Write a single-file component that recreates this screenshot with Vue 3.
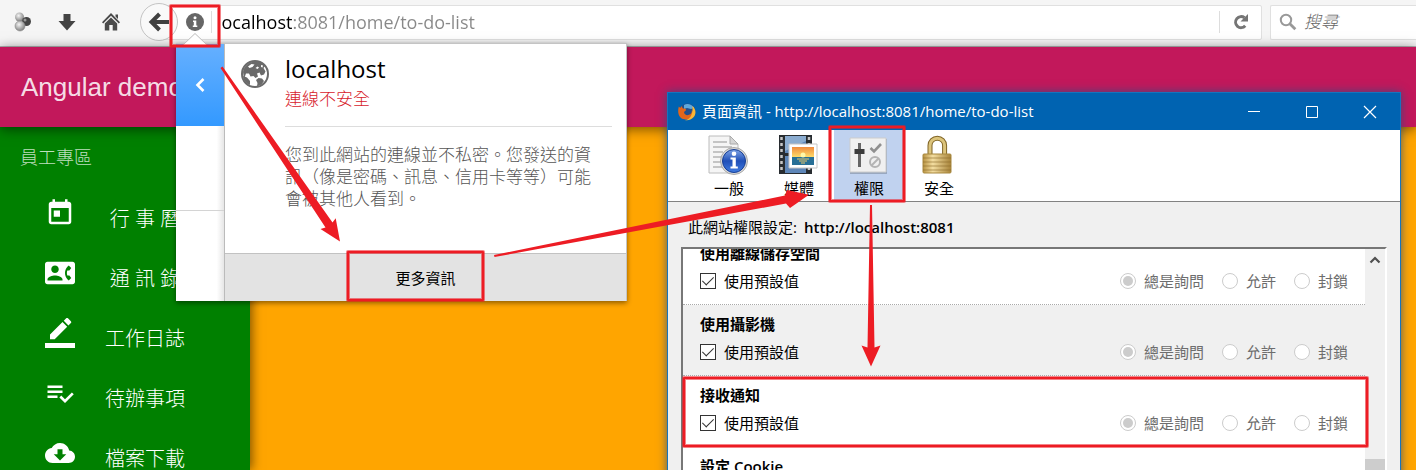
<script setup>
import { ref } from 'vue'

const address = ref('localhost:8081/home/to-do-list')
const query = ref('')

const menu = [
  { text: '行 事 曆', d: 'M19 3h-1V1h-2v2H8V1H6v2H5c-1.11 0-1.99.9-1.99 2L3 19c0 1.1.89 2 2 2h14c1.1 0 2-.9 2-2V5c0-1.1-.9-2-2-2zm0 16H5V8h14v11zM7 10h5v5H7z' },
  { text: '通 訊 錄', d: 'M22 3H2C.9 3 0 3.9 0 5v14c0 1.1.9 2 2 2h20c1.1 0 1.99-.9 1.99-2L24 5c0-1.1-.9-2-2-2zM8 6c1.66 0 3 1.34 3 3s-1.34 3-3 3-3-1.34-3-3 1.34-3 3-3zm6 12H2v-1c0-2 4-3.1 6-3.1s6 1.1 6 3.1v1zm3.85-4h1.64L21 16l-1.99 1.99c-1.31-.98-2.28-2.38-2.73-3.99-.18-.64-.28-1.31-.28-2s.1-1.36.28-2c.45-1.62 1.42-3.01 2.73-3.99L21 8l-1.51 2h-1.64c-.22.63-.35 1.3-.35 2s.13 1.37.35 2z' },
  { text: '工作日誌', d: 'M17.75 7L14 3.25l-10 10V17h3.75l10-10zm2.96-2.96c.39-.39.39-1.02 0-1.41L18.37.29c-.39-.39-1.02-.39-1.41 0L15 2.25 18.75 6l1.96-1.96zM0 20h24v4H0z' },
  { text: '待辦事項', d: 'M14 10H2v2h12v-2zm0-4H2v2h12V6zM2 16h8v-2H2v2zm19.5-4.5L23 13l-6.99 7-4.51-4.5L13 14l3.01 3 5.49-5.5z' },
  { text: '檔案下載', d: 'M19.35 10.04C18.67 6.59 15.64 4 12 4 9.11 4 6.6 5.64 5.35 8.04 2.34 8.36 0 10.91 0 14c0 3.31 2.69 6 6 6h13c2.76 0 5-2.24 5-5 0-2.64-2.05-4.78-4.65-4.96zM17 13l-5 5-5-5h3V9h4v4h3z' }
]

const tabs = [
  { id: 'general', text: '一般' },
  { id: 'media', text: '媒體' },
  { id: 'permissions', text: '權限' },
  { id: 'security', text: '安全' }
]

const choices = ['總是詢問', '允許', '封鎖']
const permissions = ref([
  { id: 'offline', title: '使用離線儲存空間', useDefault: true },
  { id: 'camera', title: '使用攝影機', useDefault: true },
  { id: 'notify', title: '接收通知', useDefault: true },
  { id: 'cookie', title: '設定 Cookie', useDefault: true }
])
</script>

<template>
  <div class="screen">
    <header class="chrome">
      <button class="tool" aria-label="擴充套件">
        <svg width="20" height="22" viewBox="0 0 20 22">
          <defs>
            <radialGradient id="ball" cx=".4" cy=".35" r=".7"><stop offset="0" stop-color="#f4f4f4" /><stop offset="1" stop-color="#777" /></radialGradient>
          </defs>
          <circle cx="6.500" cy="6" r="4.500" fill="url(#ball)" />
          <circle cx="13.500" cy="10.500" r="4.500" fill="#444" />
          <circle cx="12" cy="9" r="1.500" fill="#999" />
          <circle cx="7" cy="15" r="5" fill="url(#ball)" stroke="#888" stroke-width=".6" />
        </svg>
      </button>
      <button class="tool" aria-label="下載">
        <svg width="20" height="20" viewBox="0 0 20 20"><path d="M6.500 2h7v7H18.500L10 18.500 1.500 9H6.500z" fill="#444" /></svg>
      </button>
      <button class="tool" aria-label="首頁">
        <svg width="20" height="20" viewBox="0 0 20 20"><path d="M10 1L19 10.200 17.800 11.400 10 3.800 2.200 11.400 1 10.200z M14.500 2.500h2.500v4.500l-2.500-2.500z M10 5.600l6.200 6V18.500h-4.500V13H8.300v5.500H3.800v-6.900z" fill="#4a4a4a" /></svg>
      </button>
      <div class="address">
        <button class="back" aria-label="上一頁">
          <svg width="22" height="22" viewBox="0 0 22 22"><path d="M11.500 3L3.500 11l8 8M4 11h17" fill="none" stroke="#404040" stroke-width="4" /></svg>
        </button>
        <button class="info" aria-label="網站資訊">
          <svg width="18" height="18" viewBox="0 0 18 18"><circle cx="9" cy="9" r="9" fill="#666" /><circle cx="9" cy="4.800" r="1.500" fill="#fff" /><path d="M7 7.500h3.300v5h1v1.500H6.800v-1.500h1V9H7z" fill="#fff" /></svg>
        </button>
        <input v-model="address" class="url" type="text" aria-label="網址" />
        <button class="reload" aria-label="重新載入">
          <svg width="16" height="16" viewBox="0 0 16 16"><path d="M12.200 11.800A5.500 5.500 0 1 1 11.500 3.800" fill="none" stroke="#757575" stroke-width="3" /><path d="M15 0v7.500H7.500z" fill="#757575" /></svg>
        </button>
      </div>
      <label class="search">
        <svg width="18" height="18" viewBox="0 0 18 18"><circle cx="7" cy="7" r="5.200" fill="none" stroke="#999" stroke-width="2" /><path d="M10.800 10.800l5.500 5.500" stroke="#999" stroke-width="2.800" /></svg>
        <input v-model="query" type="text" placeholder="搜尋" aria-label="搜尋" />
      </label>
    </header>

    <div class="banner"><h1>Angular demo</h1></div>

    <div class="page">
      <nav class="sidebar">
        <h2>員工專區</h2>
        <a v-for="item in menu" :key="item.text" href="#">
          <svg width="30" height="30" viewBox="0 0 24 24"><path :d="item.d" fill="#fff" /></svg>
          <span>{{ item.text }}</span>
        </a>
      </nav>
      <main class="content"></main>
    </div>

    <section class="popover">
      <svg class="pointer" width="24" height="12" viewBox="0 0 24 12"><path d="M0 12L12 0 24 12z" fill="#fff" /><path d="M0 12L12 .5 24 12" fill="none" stroke="#bbb" /></svg>
      <div class="rail">
        <button aria-label="返回">
          <svg width="12" height="16" viewBox="0 0 12 16"><path d="M9.500 2L3.500 8l6 6" fill="none" stroke="#fff" stroke-width="2.600" /></svg>
        </button>
        <div class="rail-gap"></div>
      </div>
      <div class="details">
        <div class="site">
          <svg class="globe" width="28" height="28" viewBox="0 0 28 28">
            <circle cx="14" cy="14" r="13" fill="#fff" stroke="#6a6a6a" stroke-width="2" />
            <path d="M2 12C3 6 8 1.500 15 1.500c4 0 7 2 9 4.500l-1.500 2 2 3.500-1.500 3-3 1-1.500-3-2.500 1 1 3-2.500 1.500-2-2-3 .5-1.500-3-3 0-2 5.500z" fill="#6a6a6a" />
            <path d="M2 16l4 1.500 3 3.500 0 4-3-1.500C3.500 21 2.200 19 2 16zM15 20l2.500-2 3.500.5 2 2.500-2.500 3.500-4.500 2 .5-3.500z" fill="#6a6a6a" />
            <path d="M7 6.500l3.500-2.500 3 .5-2 2.500-3 1zM14.500 8l2-1.500 1.500 1-1.500 1.500zM20 5l2 .5-.5 2-1.500-.5z" fill="#fff" />
          </svg>
          <div class="summary">
            <h3>localhost</h3>
            <p class="insecure">連線不安全</p>
            <p class="explain">您到此網站的連線並不私密。您發送的資訊（像是密碼、訊息、信用卡等等）可能會被其他人看到。</p>
          </div>
        </div>
        <button class="more">更多資訊</button>
      </div>
    </section>

    <section class="dialog">
      <div class="titlebar">
        <svg width="18" height="18" viewBox="0 0 18 18">
          <circle cx="9.500" cy="8.500" r="8" fill="#214f8c" />
          <path d="M6 2c3-2 8-1 10 3l-3 1-4-1-3 1z" fill="#5fa9dc" />
          <path d="M.8 3.500l1.500 1.500L3.300 3l1.700 2.500c2 0 3.500.3 3 1.800L6 9c.3 2.800 2.800 3.800 5 2.800 2.200-.8 3-2.500 2.800-4.800 1.700 2.500 1.500 5-.3 7-2.500 2.500-7 3.500-10.500 1C0 12.500-.4 8 .8 3.500z" fill="#e2661b" />
          <path d="M14.500 3c3.500 3 4 8 1 11.300-2.200 2.500-5.500 3.300-8.500 2.700 5-.8 8-5 7.500-14z" fill="#fbb635" />
        </svg>
        <span class="caption">頁面資訊 - http://localhost:8081/home/to-do-list</span>
        <button aria-label="最小化"><svg width="14" height="14" viewBox="0 0 14 14"><path d="M1 6.500h12" stroke="#fff" /></svg></button>
        <button aria-label="最大化"><svg width="14" height="14" viewBox="0 0 14 14"><path d="M1.500 1.500h11v11h-11z" fill="none" stroke="#fff" /></svg></button>
        <button aria-label="關閉"><svg width="14" height="14" viewBox="0 0 14 14"><path d="M1 1l12 12M13 1L1 13" stroke="#fff" stroke-width="1.200" /></svg></button>
      </div>

      <div class="tabs">
        <button v-for="tab in tabs" :key="tab.id" :class="{ active: tab.id === 'permissions' }">
          <svg v-if="tab.id === 'general'" width="40" height="40" viewBox="0 0 40 40">
            <defs><linearGradient id="blue" x2="0" y2="1"><stop offset="0" stop-color="#7fa4e6" /><stop offset=".5" stop-color="#1f4fb8" /><stop offset="1" stop-color="#3f7be0" /></linearGradient></defs>
            <path d="M1 1h21l8 8v29H1z" fill="#f5f5f5" stroke="#bcbcbc" />
            <path d="M22 1v8h8z" fill="#d5d5d5" stroke="#aaa" />
            <path d="M5 7h14M5 12h19M5 17h10M5 22h8M5 27h8M5 32h10" stroke="#b4b4b4" stroke-width="1.500" />
            <circle cx="26" cy="26" r="13.500" fill="#dadada" stroke="#999" stroke-width=".8" />
            <circle cx="26" cy="26" r="11.500" fill="url(#blue)" stroke="#163d92" />
            <circle cx="26" cy="18.800" r="2.300" fill="#fff" />
            <path d="M22.500 22.500h5.300v9h2v2h-7.300v-2h2v-7h-2z" fill="#fff" />
          </svg>
          <svg v-else-if="tab.id === 'media'" width="40" height="40" viewBox="0 0 40 40">
            <defs><linearGradient id="sky" x2="0" y2="1"><stop offset="0" stop-color="#f08a3c" /><stop offset="1" stop-color="#ffe36e" /></linearGradient></defs>
            <path d="M1 0h33v39H1z" fill="#282c30" />
            <path d="M7 1h21v17H7zM7 21h21v17H7z" fill="#5e86b8" />
            <path d="M7 1h21v5L7 16z" fill="#8bacd0" />
            <path d="M3.500 2v36M31 2v36" stroke="#c8c8c8" stroke-width="2.500" stroke-dasharray="3 3" />
            <path d="M11 9h28v24H11z" fill="#fff" stroke="#c4c4c4" />
            <path d="M14 12h22v11H14z" fill="url(#sky)" />
            <path d="M14 22h22v8H14z" fill="#276f96" />
            <circle cx="25" cy="20" r="2.500" fill="#fff7a8" />
            <path d="M19 24h12M21 26h8M23 28h4" stroke="#e9c86c" />
          </svg>
          <svg v-else-if="tab.id === 'permissions'" width="40" height="40" viewBox="0 0 40 40">
            <path d="M2 4h37v35H2z" fill="#000" opacity=".2" />
            <path d="M2 3h36v34H2z" fill="#f0f0f0" stroke="#ccc" />
            <path d="M11.500 8v24" stroke="#666" stroke-width="3" />
            <path d="M6.500 14h10v5h-10z" fill="#3c3c3c" />
            <path d="M22.500 13l3.500 3.500L33 9" fill="none" stroke="#909090" stroke-width="2.600" />
            <circle cx="27" cy="27" r="5" fill="none" stroke="#b4b4b4" stroke-width="2" /><path d="M23.500 30.500l7-7" stroke="#b4b4b4" stroke-width="2" />
          </svg>
          <svg v-else width="40" height="40" viewBox="0 0 40 40">
            <defs><linearGradient id="brass" x2="1"><stop offset="0" stop-color="#b99443" /><stop offset=".35" stop-color="#f3dda0" /><stop offset="1" stop-color="#a8843a" /></linearGradient></defs>
            <path d="M12 20V10.500a7.300 7.300 0 0 1 14.600 0V20" fill="none" stroke="#806526" stroke-width="5" />
            <path d="M12 20V10.500a7.300 7.300 0 0 1 14.600 0V20" fill="none" stroke="#dcc47c" stroke-width="3" />
            <rect x="5" y="19" width="28" height="19" rx="1" fill="url(#brass)" stroke="#a8883f" />
            <path d="M5 23h28M5 27h28M5 31h28M5 35h28" stroke="#8b6a28" stroke-width=".6" />
          </svg>
          <span>{{ tab.text }}</span>
        </button>
      </div>

      <p class="scope">此網站權限設定:<strong>http://localhost:8081</strong></p>

      <div class="list">
        <div class="rows">
          <fieldset v-for="p in permissions" :key="p.id" class="row">
            <legend>{{ p.title }}</legend>
            <div class="options">
              <label class="default"><input v-model="p.useDefault" type="checkbox" />使用預設值</label>
              <label v-for="(c, i) in choices" :key="c" class="choice"><input type="radio" :name="p.id" :checked="i === 0" disabled />{{ c }}</label>
            </div>
          </fieldset>
        </div>
        <div class="scrollbar">
          <button aria-label="向上捲動"><svg width="12" height="10" viewBox="0 0 12 10"><path d="M1.500 7.500L6 3l4.500 4.500" fill="none" stroke="#505050" stroke-width="2.200" /></svg></button>
          <div class="thumb"></div>
        </div>
      </div>
    </section>

    <svg class="marks" width="1416" height="470" viewBox="0 0 1416 470">
      <g fill="none" stroke="#ed1c24" stroke-linejoin="round">
        <g stroke-width="4" opacity=".55"><rect x="171" y="6" width="48" height="40" /><rect x="348" y="252" width="135" height="48" /><rect x="830" y="127" width="74" height="74" /><rect x="684" y="378" width="683" height="68" /></g>
        <g stroke-width="2"><rect x="171" y="6" width="48" height="40" /><rect x="348" y="252" width="135" height="48" /><rect x="830" y="127" width="74" height="74" /><rect x="684" y="378" width="683" height="68" /></g>
      </g>
      <g fill="#ed1c24">
        <path d="M220.500 68L222.500 66.500 332.500 222.500 335.700 218.300 340 241.500 320.500 229 325.500 227.500z" />
        <path d="M494 255L785 195.500 787 190 809 194.700 790 208 786 203.500 494.500 257z" />
        <path d="M870 205h2L874.500 347.500 880.500 345.500 871 366.500 861.500 345.500 867.500 347.500z" />
      </g>
    </svg>
  </div>
</template>

<style>
html, body { margin: 0; overflow: hidden; }
</style>

<style scoped>
* { box-sizing: border-box; }
.screen {
  position: relative;
  display: flex;
  flex-direction: column;
  height: 100vh;
  overflow: hidden;
  font-family: "Open Sans", "Noto Sans CJK TC", sans-serif;
  font-size: 15px;
  line-height: 20px;
  color: #000;
}
button, input { font: inherit; color: inherit; border: 0; background: none; padding: 0; margin: 0; }
h1, h2, h3, p { margin: 0; font-weight: 400; }
button { display: flex; align-items: center; justify-content: center; }

.chrome {
  flex: none;
  display: flex;
  align-items: center;
  height: 47px;
  padding: 0 0 2px;
  background: #f5f5f5;
  border-bottom: 1px solid #b5b5b5;
  overflow: hidden;
}
.tool { flex: none; width: 44px; height: 40px; }
.address {
  flex: 1;
  display: flex;
  align-items: center;
  height: 35px;
  margin-left: 27px;
  background: #fff;
  border: 1px solid #e0e0e0;
  border-radius: 2px;
}
.chrome .tool:first-child { margin-left: 1px; }
.back {
  flex: none;
  width: 38px;
  height: 38px;
  margin-left: -21px;
  border: 1px solid #c4c4c4;
  border-radius: 50%;
  background: #f9f9f9;
}
.info { flex: none; width: 34px; height: 22px; border-right: 1px solid #ddd; }
.url {
  flex: 1;
  min-width: 0;
  height: 32px;
  margin-left: 5px;
  font-size: 18px;
  background: linear-gradient(90deg, #000 75px, #888 75px);
  -webkit-background-clip: text;
  background-clip: text;
  color: transparent;
}
.reload { flex: none; width: 42px; height: 22px; border-left: 1px solid #ddd; }
.search {
  flex: none;
  display: flex;
  align-items: center;
  gap: 7px;
  width: 146px;
  height: 35px;
  margin-left: 8px;
  padding-left: 8px;
  background: #fff;
  border: 1px solid #e0e0e0;
  border-right: 0;
  border-radius: 2px 0 0 2px;
}
.search input { width: 100px; font-size: 17px; font-weight: 300; font-style: italic; }
.search input::placeholder { color: #666; opacity: 1; }

.banner {
  flex: none;
  position: relative;
  z-index: 1;
  display: flex;
  align-items: center;
  height: 80px;
  padding-left: 21px;
  background: #c2185b;
  box-shadow: 0 2px 12px rgba(0, 0, 0, .55);
}
.banner h1 { font: 26px/32px "Liberation Sans", Arial, sans-serif; color: rgba(255, 255, 255, .87); }
.page { flex: 1; display: flex; min-height: 0; }
.content { flex: 1; background: orange; }
.sidebar {
  flex: none;
  position: relative;
  width: 250px;
  padding-top: 18px;
  background: green;
  box-shadow: 2px 0 10px rgba(0, 0, 0, .5);
  color: #fff;
  font-weight: 300;
}
.sidebar h2 { padding-left: 20px; margin-bottom: 20px; font-size: 18px; line-height: 24px; font-weight: 300; color: rgba(255, 255, 255, .75); }
.sidebar a { display: flex; align-items: center; height: 60px; padding-left: 45px; color: #fff; text-decoration: none; }
.sidebar a svg { margin-bottom: 12px; }
.sidebar span { width: 80px; margin-left: 30px; text-align: center; white-space: nowrap; font-size: 20px; line-height: 28px; }

.popover {
  position: absolute;
  z-index: 3;
  left: 176px;
  top: 43px;
  display: flex;
  width: 451px;
  background: #fff;
  border: solid #c4c4c4;
  border-width: 1px 1px 0 0;
  box-shadow: 0 2px 5px rgba(0, 0, 0, .45);
}
.pointer { position: absolute; left: 7px; top: -11px; }
.rail { flex: none; display: flex; flex-direction: column; width: 49px; border-right: 1px solid #bbb; background: linear-gradient(90deg, #fff 85%, #e6e6e6); }
.rail button { width: 100%; height: 82px; background: linear-gradient(#66b0ff, #3399ff); }
.rail-gap { height: 85px; border-bottom: 1px solid #d4d4d4; }
.details { flex: 1; }
.site { display: flex; align-items: flex-start; gap: 16px; height: 209px; padding: 16px 14px 0 16px; }
.globe { flex: none; }
.summary { flex: 1; }
.summary h3 { margin-top: -7px; font-size: 24px; line-height: 32px; }
.insecure { padding: 2px 0 15px; border-bottom: 1px solid #ddd; font-size: 17px; line-height: 24px; font-weight: 300; color: #d7222c; }
.explain { width: 310px; margin-top: 17px; font-size: 17px; line-height: 22px; font-weight: 300; color: #555; }
.more { width: 100%; height: 48px; background: #e3e3e3; border-top: 1px solid #c2c2c2; }

.dialog {
  position: absolute;
  z-index: 2;
  left: 667px;
  right: 15px;
  top: 92px;
  bottom: -20px;
  display: flex;
  flex-direction: column;
  background: #f0f0f0;
  border: 1px solid #1674bd;
  box-shadow: 0 0 9px rgba(40, 80, 130, .85);
}
.titlebar { flex: none; display: flex; align-items: center; height: 37px; padding-left: 10px; background: #0063b1; color: #fff; }
.titlebar button { width: 58px; height: 37px; }
.caption { flex: 1; margin: 0 0 2px 6px; white-space: nowrap; font-size: 15px; }
.titlebar button:last-child { margin-right: 1px; }
.tabs { flex: none; display: flex; height: 72px; padding-left: 26px; background: #fff; border-bottom: 1px solid #828282; }
.tabs button { flex-direction: column; justify-content: flex-start; width: 70px; padding: 5px 0 0; }
.tabs button span { margin-top: 3px; }
.tabs .active { height: 70px; background: #c0d2ef; }
.tabs button svg { margin-right: 2px; }
.scope { flex: none; margin: 15px 0 10px 20px; }
.scope strong { margin-left: 7px; font-weight: 600; }
.list { flex: 1; display: flex; min-height: 0; margin: 0 13px; overflow: hidden; border: 2px solid; border-color: #777 #fff #777 #777; background: #fff; }
.rows { flex: 1; margin-top: -15px; }
.row { height: 71px; min-width: 0; margin: 0; padding: 9px 17px 0; border: 0; border-bottom: 1px dotted #aaa; }
.row:nth-child(even) { background: #f0f0f0; }
.row:last-child { background: #fff; }
.row legend { float: left; width: 100%; padding: 0; font-weight: 600; line-height: 20px; }
.options { clear: both; display: flex; align-items: center; gap: 18px; height: 35px; }
.options label { display: flex; align-items: center; gap: 8px; white-space: nowrap; }
.options .default { flex: 1; }
.options input { appearance: none; flex: none; display: grid; place-items: center; width: 16px; height: 16px; border: 1px solid #333; background: #fff; }
.options input[type="checkbox"]:checked::after { content: ""; width: 5px; height: 10px; margin-bottom: 3px; border: solid #333; border-width: 0 1px 1px 0; transform: rotate(45deg); }
.choice { color: #6d6d6d; }
.options input[type="radio"] { border-color: #ccc; border-radius: 50%; }
.options input[type="radio"]:checked::after { content: ""; width: 10px; height: 10px; border-radius: 50%; background: #ccc; }
.scrollbar { flex: none; display: flex; flex-direction: column; justify-content: space-between; width: 20px; background: #f0f0f0; }
.scrollbar button { height: 22px; }
.thumb { height: 28px; background: #cdcdcd; }
.marks { position: absolute; z-index: 4; left: 0; top: 0; pointer-events: none; }
</style>
